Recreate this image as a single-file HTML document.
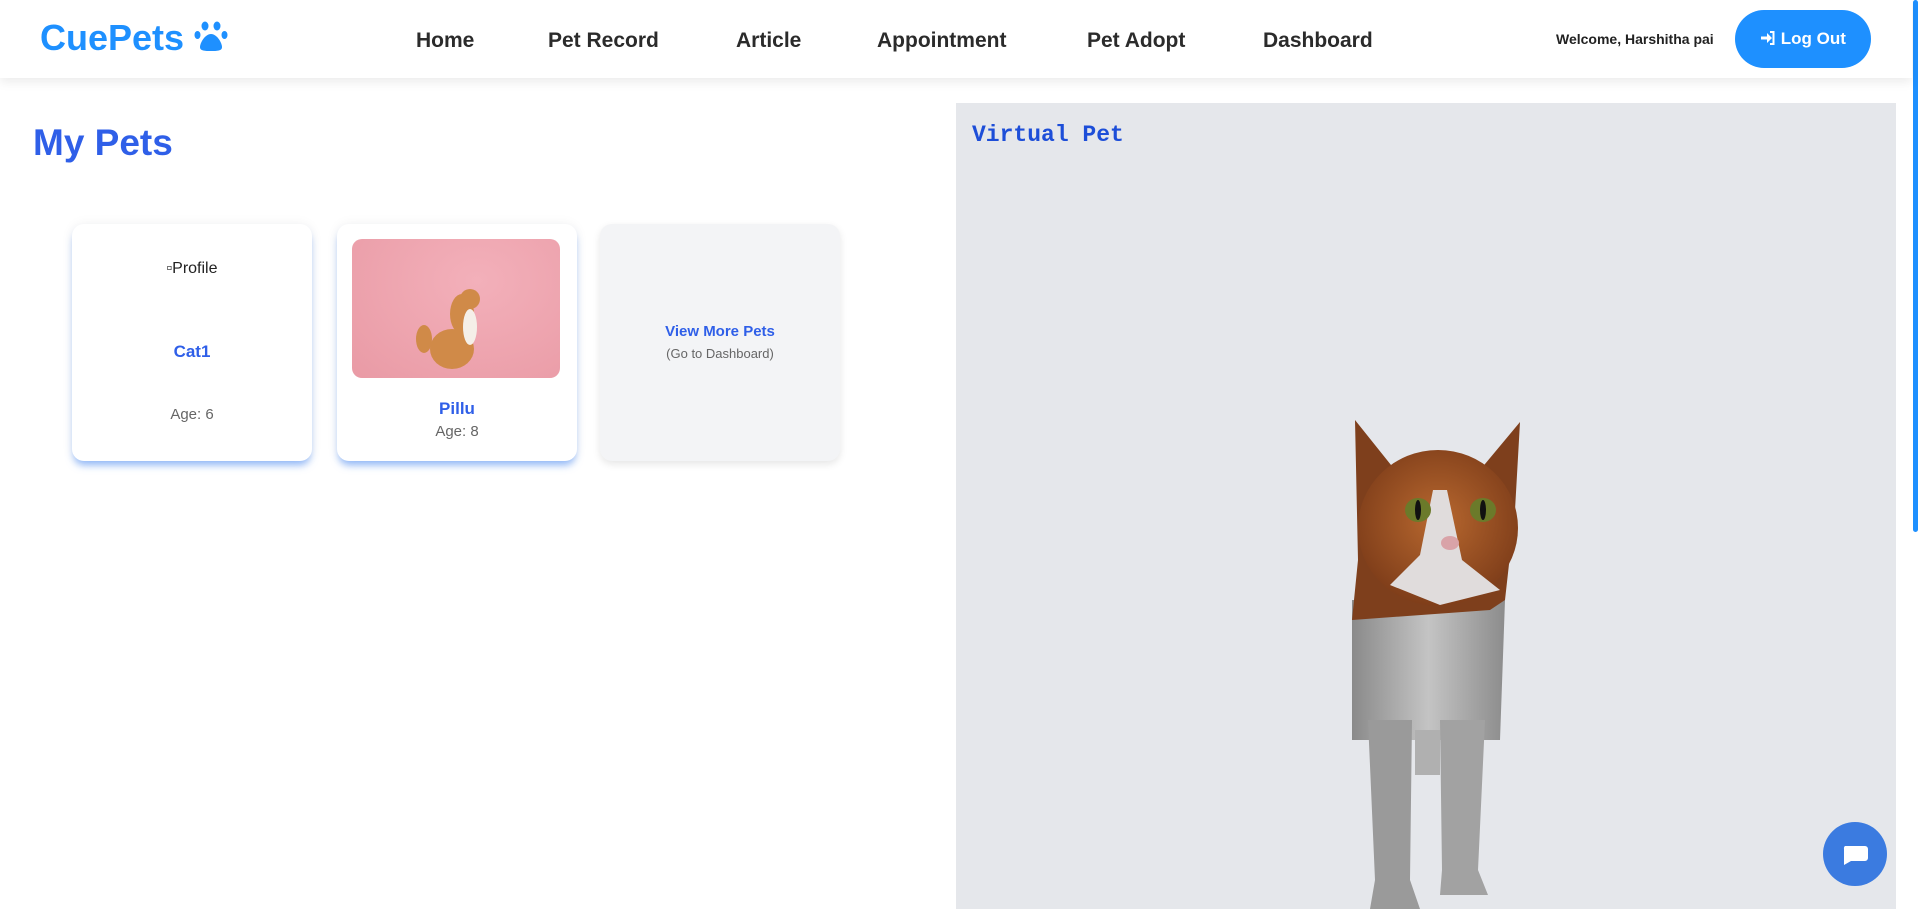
<!DOCTYPE html>
<html><head><meta charset="utf-8"><style>
*{box-sizing:border-box;margin:0;padding:0}
body{width:1919px;height:909px;overflow:hidden;background:#fff;font-family:"Liberation Sans",sans-serif;position:relative}
.hdr{position:absolute;left:0;top:0;width:1912px;height:78px;background:#fff;box-shadow:0 4px 10px rgba(0,0,0,.08);z-index:2}
.logo{position:absolute;left:40px;top:17px;font-size:36px;color:#1e90ff;font-weight:bold;letter-spacing:0}
.nav{position:absolute;top:29px;font-size:21px;color:#2b2b2b;font-weight:bold}
.welcome{position:absolute;left:1556px;top:31px;font-size:14px;font-weight:bold;color:#222}
.btn{position:absolute;left:1735px;top:10px;width:136px;height:58px;border-radius:29px;background:#1e90ff;color:#fff;font-weight:bold;font-size:17px;text-align:center;line-height:58px}
.sb{position:absolute;left:1912px;top:0;width:7px;height:909px;background:#fff}
.sb div{width:5px;height:532px;background:#1e90ff;border-radius:3px;margin-left:1px}
h1{position:absolute;left:33px;top:122px;font-size:37px;color:#2f5fe8;font-weight:bold}
.card{position:absolute;top:224px;width:240px;height:237px;background:#fff;border-radius:12px;box-shadow:0 6px 8px -2px rgba(59,130,246,.55),0 0 12px rgba(0,0,0,.06);text-align:center}
.nm{color:#2f5fe8;font-weight:bold;font-size:17px;position:absolute;width:100%}
.age{color:#666;font-size:15px;position:absolute;width:100%}
.vp{position:absolute;left:956px;top:103px;width:940px;height:806px;background:#e5e7eb}
.vpt{position:absolute;left:972px;top:122px;font-family:"Liberation Mono",monospace;font-weight:bold;font-size:23px;color:#1d4ed8}
.chat{position:absolute;left:1823px;top:822px;width:64px;height:64px;border-radius:50%;background:#3b7be0}
</style></head><body>
<div class="hdr">
<div class="logo">CuePets <svg width="34" height="34" viewBox="0 0 34 34" style="vertical-align:-3px"><g fill="#1e90ff"><ellipse cx="11" cy="7" rx="3.5" ry="4.5"/><ellipse cx="23" cy="7" rx="3.5" ry="4.5"/><ellipse cx="3.5" cy="16" rx="3" ry="4"/><ellipse cx="30.5" cy="16" rx="3" ry="4"/><path d="M17 15c-6 0-11 9-11 13 0 4 5 4 11 4s11 0 11-4c0-4-5-13-11-13z"/></g></svg></div>
<div class="nav" style="left:416px">Home</div>
<div class="nav" style="left:548px">Pet Record</div>
<div class="nav" style="left:736px">Article</div>
<div class="nav" style="left:877px">Appointment</div>
<div class="nav" style="left:1087px">Pet Adopt</div>
<div class="nav" style="left:1263px">Dashboard</div>
<div class="welcome">Welcome, Harshitha pai</div>
<div class="btn"><svg width="16" height="16" viewBox="0 0 16 16" style="vertical-align:-2px"><path d="M1 6.5h6V3l5 5-5 5V9.5H1z" fill="#fff"/><path d="M10 2h3.5v12H10" stroke="#fff" stroke-width="2" fill="none"/></svg> Log Out</div>
</div>
<div class="sb"><div></div></div>
<h1>My Pets</h1>
<div class="card" style="left:72px">
<div style="position:absolute;top:36px;width:100%;font-size:16px;color:#222">▫Profile</div>
<div class="nm" style="top:118px">Cat1</div>
<div class="age" style="top:182px">Age: 6</div>
</div>
<div class="card" style="left:337px">
<div style="position:absolute;left:15px;top:15px;width:208px;height:139px;border-radius:10px;background:radial-gradient(ellipse at 60% 30%,#f3b0ba,#e99aa5);overflow:hidden">
<svg width="208" height="139"><g fill="#d08a48"><ellipse cx="100" cy="110" rx="22" ry="20"/><ellipse cx="110" cy="75" rx="12" ry="20"/><circle cx="118" cy="60" r="10"/><ellipse cx="72" cy="100" rx="8" ry="14"/></g><ellipse cx="118" cy="88" rx="7" ry="18" fill="#f5efe8"/></svg></div>
<div class="nm" style="top:175px">Pillu</div>
<div class="age" style="top:199px">Age: 8</div>
</div>
<div class="card" style="left:600px;background:#f3f4f6;box-shadow:0 3px 8px rgba(0,0,0,.1)">
<div class="nm" style="top:99px;font-size:15px">View More Pets</div>
<div class="age" style="top:122px;font-size:13px">(Go to Dashboard)</div>
</div>
<div class="vp"></div>
<div class="vpt">Virtual Pet</div>
<svg style="position:absolute;left:0;top:0" width="1919" height="909">
<defs><linearGradient id="bd" x1="0" x2="1"><stop offset="0" stop-color="#8a8a8a"/><stop offset=".5" stop-color="#c4c4c4"/><stop offset="1" stop-color="#8c8c8c"/></linearGradient>
<radialGradient id="hd" cx=".5" cy=".45" r=".6"><stop offset="0" stop-color="#b8682f"/><stop offset="1" stop-color="#7a3a18"/></radialGradient></defs>
<path d="M1352 600 L1505 600 L1500 740 L1352 740 Z" fill="url(#bd)"/>
<path d="M1368 720 L1412 720 L1410 880 L1420 909 L1370 909 L1375 880 Z" fill="#9a9a9a"/>
<path d="M1440 720 L1485 720 L1478 870 L1488 895 L1440 895 L1442 870 Z" fill="#a2a2a2"/>
<rect x="1415" y="730" width="25" height="45" fill="#b0b0b0"/>
<path d="M1352 620 L1358 560 L1355 420 L1395 470 L1480 470 L1520 422 L1515 510 L1505 600 L1490 610 Z" fill="#7e3f1c"/>
<ellipse cx="1438" cy="528" rx="80" ry="78" fill="url(#hd)"/>
<path d="M1433 490 L1447 490 L1462 560 L1500 590 L1440 605 L1390 585 L1420 555 Z" fill="#e0dcdc"/>
<ellipse cx="1418" cy="510" rx="13" ry="12" fill="#6b7a2a"/><ellipse cx="1483" cy="510" rx="13" ry="12" fill="#6b7a2a"/>
<ellipse cx="1418" cy="510" rx="3" ry="10" fill="#111"/><ellipse cx="1483" cy="510" rx="3" ry="10" fill="#111"/>
<ellipse cx="1450" cy="543" rx="9" ry="7" fill="#d9a3a8"/>
</svg>
<div class="chat"><svg width="64" height="64" viewBox="0 0 64 64"><path d="M22 24h20a3 3 0 0 1 3 3v9a3 3 0 0 1-3 3H28l-7 4v-16a3 3 0 0 1 1-3z" fill="#fff"/></svg></div>
</body></html>
